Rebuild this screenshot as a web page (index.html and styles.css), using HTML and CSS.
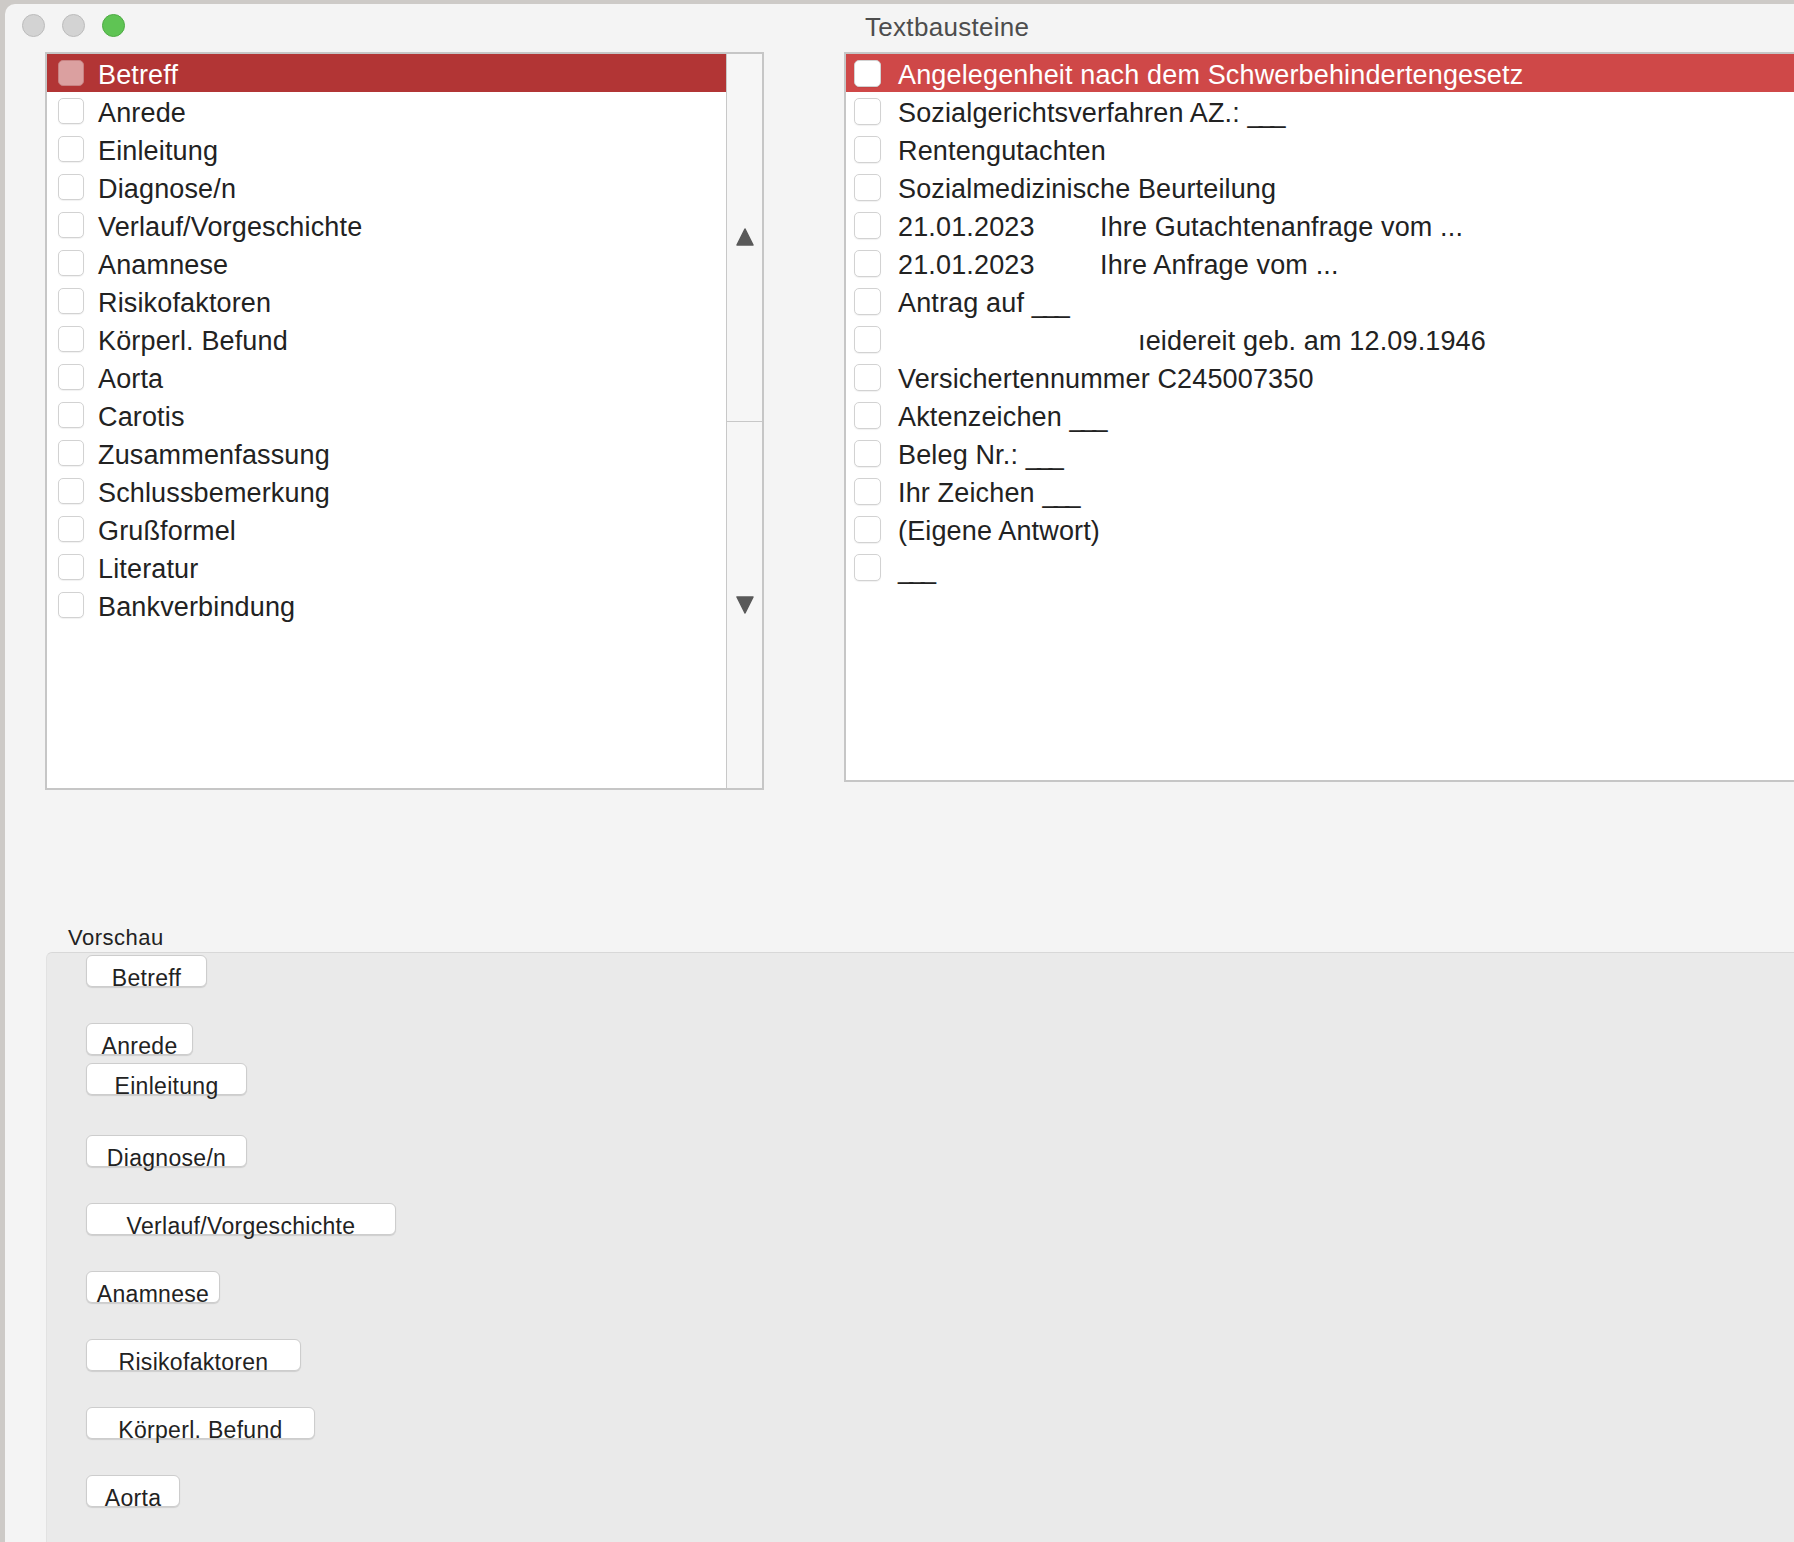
FILE: index.html
```html
<!DOCTYPE html>
<html lang="de">
<head>
    <meta charset="UTF-8">
    <title>Textbausteine</title>
    <link rel="stylesheet" href="styles.css">
</head>
<body>
    <div class="window">
        <div class="titlebar">
            <div class="lights">
                <span class="light"></span>
                <span class="light"></span>
                <span class="light green"></span>
            </div>
            <div class="title">Textbausteine</div>
        </div>

        <div class="panes">
            <div class="box sections">
                <ul class="list">
                    <li class="row selected"><span class="check"></span><span class="label">Betreff</span></li>
                    <li class="row"><span class="check"></span><span class="label">Anrede</span></li>
                    <li class="row"><span class="check"></span><span class="label">Einleitung</span></li>
                    <li class="row"><span class="check"></span><span class="label">Diagnose/n</span></li>
                    <li class="row"><span class="check"></span><span class="label">Verlauf/Vorgeschichte</span></li>
                    <li class="row"><span class="check"></span><span class="label">Anamnese</span></li>
                    <li class="row"><span class="check"></span><span class="label">Risikofaktoren</span></li>
                    <li class="row"><span class="check"></span><span class="label">Körperl. Befund</span></li>
                    <li class="row"><span class="check"></span><span class="label">Aorta</span></li>
                    <li class="row"><span class="check"></span><span class="label">Carotis</span></li>
                    <li class="row"><span class="check"></span><span class="label">Zusammenfassung</span></li>
                    <li class="row"><span class="check"></span><span class="label">Schlussbemerkung</span></li>
                    <li class="row"><span class="check"></span><span class="label">Grußformel</span></li>
                    <li class="row"><span class="check"></span><span class="label">Literatur</span></li>
                    <li class="row"><span class="check"></span><span class="label">Bankverbindung</span></li>
                </ul>
                <div class="scroller">
                    <div class="scroll-btn up">
                        <svg width="18" height="18" viewBox="0 0 18 18"><path d="M9 1 L17 17 L1 17 Z" fill="#595959" stroke="#595959" stroke-linejoin="round" stroke-width="1.5"/></svg>
                    </div>
                    <div class="scroll-btn down">
                        <svg width="18" height="18" viewBox="0 0 18 18"><path d="M1 1 L17 1 L9 17 Z" fill="#595959" stroke="#595959" stroke-linejoin="round" stroke-width="1.5"/></svg>
                    </div>
                </div>
            </div>

            <div class="box snippets">
                <ul class="list">
                    <li class="row selected"><span class="check"></span><span class="label">Angelegenheit nach dem Schwerbehindertengesetz</span></li>
                    <li class="row"><span class="check"></span><span class="label">Sozialgerichtsverfahren AZ.: <span class="blank">___</span></span></li>
                    <li class="row"><span class="check"></span><span class="label">Rentengutachten</span></li>
                    <li class="row"><span class="check"></span><span class="label">Sozialmedizinische Beurteilung</span></li>
                    <li class="row"><span class="check"></span><span class="label"><span class="date">21.01.2023</span>Ihre Gutachtenanfrage vom ...</span></li>
                    <li class="row"><span class="check"></span><span class="label"><span class="date">21.01.2023</span>Ihre Anfrage vom ...</span></li>
                    <li class="row"><span class="check"></span><span class="label">Antrag auf <span class="blank">___</span></span></li>
                    <li class="row"><span class="check"></span><span class="label masked">ıeidereit geb. am 12.09.1946</span></li>
                    <li class="row"><span class="check"></span><span class="label">Versichertennummer C245007350</span></li>
                    <li class="row"><span class="check"></span><span class="label">Aktenzeichen <span class="blank">___</span></span></li>
                    <li class="row"><span class="check"></span><span class="label">Beleg Nr.: <span class="blank">___</span></span></li>
                    <li class="row"><span class="check"></span><span class="label">Ihr Zeichen <span class="blank">___</span></span></li>
                    <li class="row"><span class="check"></span><span class="label">(Eigene Antwort)</span></li>
                    <li class="row"><span class="check"></span><span class="label"><span class="blank">___</span></span></li>
                </ul>
            </div>
        </div>

        <div class="preview">
            <div class="preview-label">Vorschau</div>
            <div class="preview-panel">
                <div class="chip" style="width: 121px;">Betreff</div>
                <div class="chip" style="width: 107px;">Anrede</div>
                <div class="chip tight" style="width: 161px;">Einleitung</div>
                <div class="chip loose" style="width: 161px;">Diagnose/n</div>
                <div class="chip" style="width: 310px;">Verlauf/Vorgeschichte</div>
                <div class="chip" style="width: 134px;">Anamnese</div>
                <div class="chip" style="width: 215px;">Risikofaktoren</div>
                <div class="chip" style="width: 229px;">Körperl. Befund</div>
                <div class="chip" style="width: 94px;">Aorta</div>
            </div>
        </div>
    </div>
</body>
</html>
```

FILE: styles.css
```css
* {
    margin: 0;
    padding: 0;
    box-sizing: border-box;
}

html, body {
    width: 1794px;
    height: 1542px;
    overflow: hidden;
}

body {
    background: #cdcac7;
    font-family: 'Liberation Sans', Arial, sans-serif;
    color: #222;
}

.window {
    margin: 4px 0 0 5px;
    width: 1900px;
    height: 1600px;
    background: #f4f4f4;
    border-top-left-radius: 10px;
}

/* title bar */
.titlebar {
    height: 48px;
    display: flex;
    align-items: flex-start;
}

.lights {
    display: flex;
    gap: 17px;
    padding: 10px 0 0 17px;
}

.light {
    width: 23px;
    height: 23px;
    border-radius: 50%;
    background: #d3d3d3;
    border: 1px solid #bcbcbc;
}

.light.green {
    background: #5fc454;
    border-color: #4eab44;
}

.title {
    margin-left: 740px;
    padding-top: 8px;
    font-size: 26px;
    line-height: 30px;
    letter-spacing: 0.3px;
    color: #4d4d4d;
}

/* lists */
.panes {
    display: flex;
    gap: 80px;
    padding-left: 40px;
}

.box {
    background: #fff;
    border: 2px solid #c6c6c6;
}

.sections {
    width: 719px;
    height: 738px;
    display: flex;
}

.snippets {
    flex: 1;
    height: 730px;
    border-right: none;
}

.list {
    list-style: none;
    flex: 1;
}

.row {
    height: 38px;
    display: flex;
    align-items: center;
    font-size: 27px;
    letter-spacing: 0.15px;
    white-space: nowrap;
}

.label {
    margin-top: 4px;
}

.check {
    width: 26px;
    height: 26px;
    flex-shrink: 0;
    background: #fff;
    border: 1px solid #d2d2d2;
    border-radius: 5px;
    box-shadow: 0 1px 1px rgba(0, 0, 0, 0.06);
}

.sections .row {
    padding-left: 11px;
}

.sections .check {
    margin-right: 14px;
}

.snippets .row {
    padding-left: 8px;
}

.snippets .check {
    width: 27px;
    height: 27px;
    margin-right: 17px;
}

.sections .selected {
    background: #b23535;
    color: #fff;
}

.sections .selected .check {
    background: #dba0a0;
    border-color: #c88282;
    box-shadow: none;
}

.snippets .selected {
    background: #cf4848;
    color: #fff;
}

.blank {
    letter-spacing: -3.5px;
}

.date {
    display: inline-block;
    width: 202px;
}

.masked {
    padding-left: 240px;
}

/* scroll column */
.scroller {
    width: 36px;
    border-left: 1px solid #c8c8c8;
    background: #f6f6f6;
    display: flex;
    flex-direction: column;
}

.scroll-btn {
    flex: 1;
    display: flex;
    align-items: center;
    justify-content: center;
}

.scroll-btn.up {
    border-bottom: 1px solid #c8c8c8;
}

/* preview */
.preview-label {
    margin: 136px 0 0 63px;
    font-size: 22px;
    line-height: 24px;
    letter-spacing: 0.5px;
    color: #222;
}

.preview-panel {
    margin: 2px 0 0 41px;
    height: 700px;
    padding: 2px 0 0 39px;
    background: #eaeaea;
    border-top: 1px solid #d8d8d8;
    border-left: 1px solid #e2e2e2;
    border-top-left-radius: 6px;
}

.chip {
    height: 32px;
    margin-top: 36px;
    padding-top: 11px;
    background: #fff;
    border: 1px solid #cdcdcd;
    border-radius: 6px;
    box-shadow: 0 1px 1px rgba(0, 0, 0, 0.12);
    font-size: 23px;
    line-height: 22px;
    letter-spacing: 0.3px;
    text-align: center;
    white-space: nowrap;
    color: #222;
}

.chip:first-child {
    margin-top: 0;
}

.chip.tight {
    margin-top: 8px;
}

.chip.loose {
    margin-top: 40px;
}
```
